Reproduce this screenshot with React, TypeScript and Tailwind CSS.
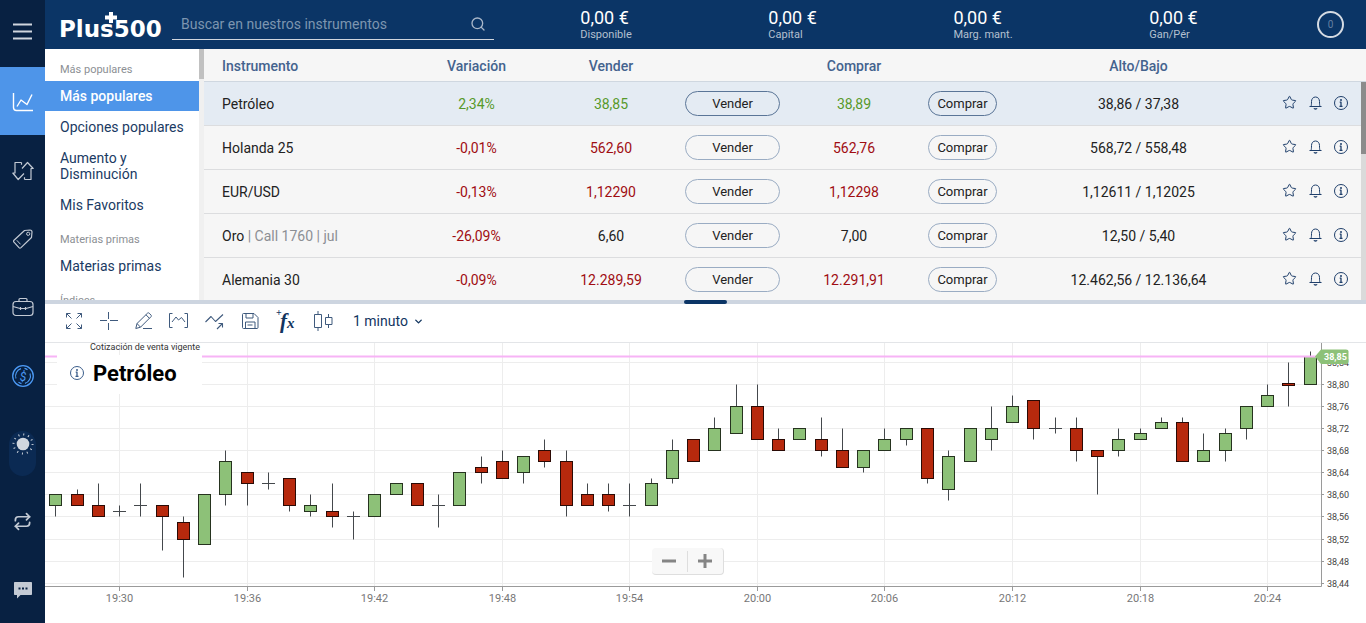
import { useState } from 'react'
import type { ReactNode } from 'react'
import { ChevronDown, Repeat, Search, Star } from 'lucide-react'
import clsx from 'clsx'

const balances = [
  { label: 'Disponible', value: '0,00 €' },
  { label: 'Capital', value: '0,00 €' },
  { label: 'Marg. mant.', value: '0,00 €' },
  { label: 'Gan/Pér', value: '0,00 €' },
]

const categories = [
  { title: 'Más populares', items: ['Más populares', 'Opciones populares', 'Aumento y Disminución', 'Mis Favoritos'] },
  { title: 'Materias primas', items: ['Materias primas'] },
  { title: 'Índices', items: [] },
]

type Trend = 'up' | 'down' | 'flat'

interface Instrument {
  name: string
  detail?: string
  change: string
  sell: string
  buy: string
  range: string
  trend: Trend
}

const instruments: Instrument[] = [
  { name: 'Petróleo', change: '2,34%', sell: '38,85', buy: '38,89', range: '38,86 / 37,38', trend: 'up' },
  { name: 'Holanda 25', change: '-0,01%', sell: '562,60', buy: '562,76', range: '568,72 / 558,48', trend: 'down' },
  { name: 'EUR/USD', change: '-0,13%', sell: '1,12290', buy: '1,12298', range: '1,12611 / 1,12025', trend: 'down' },
  { name: 'Oro', detail: ' | Call 1760 | jul', change: '-26,09%', sell: '6,60', buy: '7,00', range: '12,50 / 5,40', trend: 'flat' },
  { name: 'Alemania 30', change: '-0,09%', sell: '12.289,59', buy: '12.291,91', range: '12.462,56 / 12.136,64', trend: 'down' },
]

// one candle per minute from 19:27: open, high, low, close in cents above 38,00
const candles: [number, number, number, number][] = [
  [58, 60, 56, 60], [60, 61, 58, 58], [58, 62, 56, 56], [57, 58, 56, 57], [58, 62, 56, 58],
  [58, 58, 50, 56], [55, 56, 45, 52], [51, 60, 51, 60], [60, 68, 58, 66], [64, 64, 58, 62],
  [62, 64, 61, 62], [63, 63, 57, 58], [57, 60, 56, 58], [57, 62, 54, 56], [56, 57, 52, 56],
  [56, 60, 56, 60], [60, 62, 60, 62], [62, 62, 58, 58], [58, 60, 54, 58], [58, 64, 58, 64],
  [65, 67, 62, 64], [66, 68, 63, 63], [64, 67, 62, 67], [68, 70, 65, 66], [66, 68, 56, 58],
  [60, 62, 58, 58], [60, 62, 57, 58], [58, 62, 56, 58], [58, 63, 58, 62], [63, 70, 62, 68],
  [70, 70, 66, 66], [68, 74, 68, 72], [71, 80, 71, 76], [76, 80, 70, 70], [70, 72, 68, 68],
  [70, 72, 70, 72], [70, 74, 67, 68], [68, 72, 65, 65], [65, 68, 64, 68], [68, 72, 68, 70],
  [70, 72, 69, 72], [72, 72, 62, 63], [61, 68, 59, 67], [66, 72, 66, 72], [70, 76, 68, 72],
  [73, 78, 73, 76], [77, 77, 70, 72], [72, 74, 71, 72], [72, 74, 66, 68], [68, 68, 60, 67],
  [68, 72, 67, 70], [70, 72, 70, 71], [72, 74, 72, 73], [73, 74, 66, 66], [66, 71, 66, 68],
  [68, 72, 66, 71], [72, 76, 70, 76], [76, 80, 76, 78], [80.1, 84, 76, 79.8], [80, 86, 80, 85],
]

const times = ['19:30', '19:36', '19:42', '19:48', '19:54', '20:00', '20:06', '20:12', '20:18', '20:24']
const prices = [84, 80, 76, 72, 68, 64, 60, 56, 52, 48, 44]

const candleX = (i: number) => Math.round(10.35 + i * 21.26) + 0.5
const priceY = (p: number) => Math.round(40.7 + (80 - p) * 5.53) + 0.5

const trendColor: Record<Trend, string> = {
  up: 'text-[#57992a]',
  down: 'text-[#a00d12]',
  flat: 'text-[#222]',
}

function Icon({ w, h, children, className }: { w: number; h: number; children: ReactNode; className?: string }) {
  return (
    <svg
      width={w}
      height={h}
      viewBox={`0 0 ${w} ${h}`}
      fill="none"
      stroke="currentColor"
      strokeLinejoin="round"
      className={clsx('shrink-0', className)}
      aria-hidden="true"
    >
      {children}
    </svg>
  )
}

function InfoIcon() {
  return (
    <Icon w={14} h={14}>
      <circle cx="7" cy="7" r="6.5" strokeWidth="1" />
      <path d="M5.7 6.2H7V10.2M5.5 10.4h3" strokeWidth="1.3" />
      <circle cx="7" cy="3.9" r="1" fill="currentColor" stroke="none" />
    </Icon>
  )
}

function BellIcon() {
  return (
    <Icon w={13} h={14}>
      <path d="M.5 10.5h12M2 10.5C2.4 9.5 2.5 8 2.5 5.5 2.5 3 4 1 6.5 1s4 2 4 4.5c0 2.5.1 4 .5 5" />
      <path d="M5 12.3c.4.9 2.6.9 3 0" strokeWidth="1.3" />
    </Icon>
  )
}

function Logo() {
  return (
    <a href="#" className="relative mt-2 block w-[113px] font-['DejaVu_Sans',sans-serif] text-[23px] leading-7 font-bold text-white">
      Plus500
      <svg width="12" height="11" viewBox="0 0 12 11" className="absolute -top-[3px] left-[46px]" fill="currentColor" aria-hidden="true">
        <path d="M4 0h4v3.5h4v4H8V11H4V7.5H0v-4h4z" />
      </svg>
    </a>
  )
}

function NavButton({ label, active, children }: { label: string; active?: boolean; children: ReactNode }) {
  return (
    <button
      type="button"
      aria-label={label}
      className={clsx(
        'flex w-full flex-1 items-center justify-center pt-0.5',
        active ? 'bg-[#4e95e9] text-white' : 'text-[#c3cad4]',
      )}
    >
      {children}
    </button>
  )
}

function SideNav() {
  return (
    <nav className="flex w-[45px] shrink-0 flex-col bg-[#082142]">
      <button type="button" aria-label="Menú" className="flex h-[67px] items-center justify-center pb-[5px] text-[#d0d6de]">
        <Icon w={19} h={17}>
          <path d="M0 1.5h19M0 8.5h19M0 15.5h19" strokeWidth="1.8" />
        </Icon>
      </button>
      <NavButton label="Operar" active>
        <Icon w={22} h={20}>
          <path d="M1.5 1v14.5c0 2 1 3 3 3H21M5 14.5l4-6.5 6 4.500 5-10" strokeWidth="1.4" />
        </Icon>
      </NavButton>
      <NavButton label="Posiciones">
        <Icon w={22} h={20}>
          <path d="M9.5 1.5H3V12H.8l5.4 6.500L12 12.500M9.500 1.500v2.200M12.500 18.500H19V7.500h2.200L15.500 1.500 10 7.500M12.500 18.500v-2.200" strokeWidth="1.2" />
        </Icon>
      </NavButton>
      <NavButton label="Órdenes">
        <Icon w={20} h={20}>
          <path d="M11.5 1.5 17 1c1.3 0 2 .7 2 2l-.5 5.500L8 18.600c-.7.600-1.400.600-2 0L1 13.200c-.6-.7-.6-1.400 0-2z" strokeWidth="1.2" />
          <circle cx="15.2" cy="4.8" r="1.6" />
          <path d="m3.8 11.3 3.7 4" />
        </Icon>
      </NavButton>
      <NavButton label="Posiciones cerradas">
        <Icon w={22} h={20}>
          <rect x="1" y="4.500" width="20" height="14" rx="3" strokeWidth="1.2" />
          <path d="M7 4.500v-2c0-.6.400-1 1-1h6c.6 0 1 .400 1 1v2M1 9.500l7 2M14 11.500l7-2M8 11.500h6M8.500 10v3M13.500 10v3" strokeWidth="1.2" />
        </Icon>
      </NavButton>
      <NavButton label="Fondos">
        <Icon w={22} h={22} className="text-[#4c9af5]">
          <circle cx="11" cy="11" r="10.3" strokeWidth="1.3" />
          <path d="M4 13.500A7.700 7.700 0 0 1 9 3.600M18 8.500a7.700 7.700 0 0 1-5 9.900M12.500 3.400a7.700 7.700 0 0 1 3 1.300M9.500 18.600a7.700 7.700 0 0 1-3-1.300" strokeWidth="1.1" />
          <text x="11" y="15.500" textAnchor="middle" fontSize="12" fontStyle="italic" fontFamily="Roboto, sans-serif" fill="currentColor" stroke="none">$</text>
        </Icon>
      </NavButton>
      <div className="flex h-[77px] items-start justify-center pt-[22px]">
        <button type="button" aria-label="Modo claro" className="flex h-[45px] w-[27px] justify-center rounded-full bg-[#0b2a53] pt-0.5 text-[#d0d6de]">
          <Icon w={22} h={22}>
            <circle cx="11" cy="11" r="6.3" fill="currentColor" stroke="none" />
            <circle cx="11" cy="11" r="9.5" strokeWidth="2" strokeDasharray="1 3.974" />
          </Icon>
        </button>
      </div>
      <NavButton label="Cambiar cuenta">
        <Repeat size={19} strokeWidth={2.2} />
      </NavButton>
      <NavButton label="Chat">
        <Icon w={20} h={18}>
          <path d="M2 1h16c.6 0 1 .4 1 1v11c0 .6-.4 1-1 1H7.500L4 17.500V14H2c-.6 0-1-.4-1-1V2c0-.6.4-1 1-1z" fill="currentColor" stroke="none" />
          <path d="M5.500 7.500h2M9 7.500h2M12.500 7.500h2" stroke="#082142" strokeWidth="1.8" />
        </Icon>
      </NavButton>
    </nav>
  )
}

function Header() {
  return (
    <header className="flex h-[49px] items-center bg-[#0b3566] pr-[22px] pl-[14px]">
      <Logo />
      <label className="flex h-[30px] w-[322px] items-center border-b border-[#d0d6de] pr-2 pl-[9px]">
        <input
          type="search"
          aria-label="Buscar"
          placeholder="Buscar en nuestros instrumentos"
          className="min-w-0 flex-1 bg-transparent text-sm text-white outline-none placeholder:text-[#7d95b0]"
        />
        <Search size={16} strokeWidth={2} className="text-[#a9b7c9]" />
      </label>
      <dl className="ml-[18px] flex flex-1 justify-around pt-px">
        {balances.map(b => (
          <div key={b.label} className="flex flex-col-reverse">
            <dt className="text-[11px] leading-[14px] text-[#b4c0d0]">{b.label}</dt>
            <dd className="text-[18px] leading-5 text-white">{b.value}</dd>
          </div>
        ))}
      </dl>
      <button
        type="button"
        aria-label="Notificaciones"
        className="ml-[51px] flex size-[27px] items-center justify-center rounded-full border-2 border-[#d5dbe3] text-[10px] text-[#6680a3]"
      >
        0
      </button>
    </header>
  )
}

function CategoryList() {
  const [selected, setSelected] = useState('Más populares')

  return (
    <div className="flex w-[159px] shrink-0 bg-white">
      <div className="flex flex-1 flex-col overflow-hidden pt-px">
        {categories.map(group => (
          <section key={group.title} className="flex flex-col gap-px">
            <h2 className="h-[30px] shrink-0 pt-3 pl-[15px] text-[11px] leading-4 text-[#8c8f94]">{group.title}</h2>
            {group.items.map(item => (
              <button
                key={item}
                type="button"
                onClick={() => setSelected(item)}
                className={clsx(
                  'py-[7px] pr-3 pl-[15px] text-left text-sm leading-4 text-balance',
                  item === selected ? 'bg-[#4e95e9] font-medium text-white' : 'text-[#1a3a63]',
                )}
              >
                {item}
              </button>
            ))}
          </section>
        ))}
      </div>
      <div className="w-[5px] bg-[#f0f0f0]">
        <div className="h-[30px] bg-[#c1c1c1]" />
      </div>
    </div>
  )
}

function InstrumentTable() {
  return (
    <div className="relative min-w-0 flex-1 overflow-hidden bg-[#f6f6f6]">
      <table className="w-full table-fixed border-separate border-spacing-0 text-center text-sm text-[#222]">
        <colgroup>
          <col />
          <col className="w-[121px]" />
          <col className="w-[148px]" />
          <col className="w-[95px]" />
          <col className="w-[148px]" />
          <col className="w-[69px]" />
          <col className="w-[283px]" />
          <col className="w-[86px]" />
        </colgroup>
        <thead>
          <tr className="text-[#44638e] [&>th]:h-[33px] [&>th]:border-b [&>th]:border-[#cfd7e0] [&>th]:pt-0.5 [&>th]:font-medium">
            <th className="pl-[18px] text-left">Instrumento</th>
            <th>Variación</th>
            <th>Vender</th>
            <th />
            <th>Comprar</th>
            <th />
            <th>Alto/Bajo</th>
            <th />
          </tr>
        </thead>
        <tbody>
          {instruments.map((row, i) => (
            <tr
              key={row.name}
              className={clsx('[&>td]:h-11 [&>td]:border-b [&>td]:border-[#dcdddf]', i === 0 && 'bg-[#e4ebf3]')}
            >
              <td className="pl-[18px] text-left">
                {row.name}
                {row.detail && <span className="text-[#8c8f94]">{row.detail}</span>}
              </td>
              <td className={trendColor[row.trend === 'flat' ? 'down' : row.trend]}>{row.change}</td>
              <td className={trendColor[row.trend]}>{row.sell}</td>
              <td>
                <TradeButton selected={i === 0}>Vender</TradeButton>
              </td>
              <td className={trendColor[row.trend]}>{row.buy}</td>
              <td>
                <TradeButton selected={i === 0}>Comprar</TradeButton>
              </td>
              <td>{row.range}</td>
              <td>
                <div className="flex items-center gap-3 pb-0.5 pl-0.5 text-[#1f3f6b]">
                  <button type="button" aria-label={`Añadir ${row.name} a favoritos`}>
                    <Star size={15} strokeWidth={1.6} />
                  </button>
                  <button type="button" aria-label={`Alertas de ${row.name}`}>
                    <BellIcon />
                  </button>
                  <button type="button" aria-label={`Detalles de ${row.name}`}>
                    <InfoIcon />
                  </button>
                </div>
              </td>
            </tr>
          ))}
        </tbody>
      </table>
      <div className="absolute top-[33px] right-0 bottom-0 w-[5px] bg-[#dadada]">
        <div className="h-[72px] bg-[#8b8b8b]" />
      </div>
    </div>
  )
}

function TradeButton({ selected, children }: { selected: boolean; children: ReactNode }) {
  return (
    <button
      type="button"
      className={clsx(
        'block h-[25px] w-full rounded-full border text-[13px] leading-[22px]',
        selected ? 'border-[#5a7597]' : 'border-[#9aacc3]',
      )}
    >
      {children}
    </button>
  )
}

function ChartToolbar() {
  return (
    <div className="flex h-[39px] items-center gap-[17px] border-b border-[#e3e5e8] bg-white pb-1 pl-5 text-[#3f5a7d]">
      <button type="button" aria-label="Pantalla completa">
        <Icon w={18} h={18}>
          <path d="M1.5 5.5v-4h4M12.500 1.500h4v4M16.500 12.500v4h-4M5.500 16.500h-4v-4M1.500 1.500l5 5M16.500 1.500l-5 5M16.500 16.500l-5-5M1.500 16.500l5-5" />
        </Icon>
      </button>
      <button type="button" aria-label="Cruz">
        <Icon w={18} h={18}>
          <path d="M8.500 0v7M8.500 11v7M0 8.500h7M10 8.500h8" />
        </Icon>
      </button>
      <button type="button" aria-label="Dibujar">
        <Icon w={17} h={18}>
          <path d="M.8 16.500 2 11.500 12.500 1.200c.6-.5 1.200-.5 1.700 0l1.800 1.900c.5.6.5 1.100 0 1.600L5.500 15.200zM2 11.500l3.500 3.700M11 2.800l3.400 3.500M8 16.500h9" />
        </Icon>
      </button>
      <button type="button" aria-label="Tipo de gráfico">
        <Icon w={19} h={18}>
          <path d="M3.500 1.500h-3v14h3M15.500 1.500h3v14h-3M3 10l4-5 2.500 3 3-2.500L16 10" />
        </Icon>
      </button>
      <button type="button" aria-label="Línea de tendencia">
        <Icon w={19} h={18}>
          <path d="M.5 10 6 4.500l4.500 5L18 2.500M12 17l5.500-5.500M13.500 11.500h4v4" strokeWidth="1.1" />
        </Icon>
      </button>
      <button type="button" aria-label="Guardar">
        <Icon w={18} h={18}>
          <path d="M1.500 2.500c0-.6.4-1 1-1H13l4 4v10c0 .6-.4 1-1 1H2.500c-.6 0-1-.4-1-1zM5 1.500v4.500h7V1.500M4.500 16.500V10h9.500v6.500M6.500 13h5" />
        </Icon>
      </button>
      <button type="button" aria-label="Indicadores" className="relative h-[18px] w-[19px] pl-1 text-left font-['Liberation_Serif',serif] text-[21px] leading-[18px] font-bold text-[#12355f] italic">
        f<span className="text-[15px]">x</span>
        <span className="absolute -top-1 left-0 text-[10px] leading-[10px] not-italic">+</span>
      </button>
      <button type="button" aria-label="Velas" className="pl-px">
        <Icon w={20} h={20}>
          <path d="M1.500 3.500h7v13h-7zM5 0v3.500M5 16.500V20M12.500 6.500h6.500v7h-6.500zM15.500 3v3.500M15.500 13.500V17" />
        </Icon>
      </button>
      <label className="relative ml-[3px] flex items-center">
        <select aria-label="Intervalo" className="w-[71px] appearance-none bg-transparent text-sm text-[#12355f] outline-none">
          <option>1 minuto</option>
          <option>5 minutos</option>
          <option>1 hora</option>
        </select>
        <ChevronDown size={11} strokeWidth={3} className="pointer-events-none absolute right-0 text-[#12355f]" />
      </label>
    </div>
  )
}

function CandleChart() {
  return (
    <svg viewBox="0 0 1321 280" className="block w-full font-['Roboto',sans-serif]" role="img" aria-label="Gráfico de velas">
      <g stroke="#ededed">
        {prices.map(p => (
          <line key={p} x1="0" x2="1276" y1={priceY(p)} y2={priceY(p)} />
        ))}
        {times.map((t, i) => (
          <line key={t} x1={candleX(3 + i * 6)} x2={candleX(3 + i * 6)} y1="0" y2="243" />
        ))}
      </g>
      {candles.map(([open, high, low, close], i) => {
        const x = candleX(i)
        const top = priceY(Math.max(open, close))
        const bottom = priceY(Math.min(open, close))
        return (
          <g key={i}>
            <line x1={x} x2={x} y1={priceY(high)} y2={priceY(low)} stroke="#44484c" />
            {open === close ? (
              <line x1={x - 6.5} x2={x + 6.5} y1={top} y2={top} stroke="#44484c" />
            ) : (
              <rect
                x={x - 6}
                y={top}
                width="12"
                height={bottom - top}
                fill={close > open ? '#8dc178' : '#b7290d'}
                stroke={close > open ? '#26331f' : '#2b0a05'}
              />
            )}
          </g>
        )
      })}
      <line x1="0" x2="1276" y1="13.5" y2="13.5" stroke="#f7b4f6" strokeWidth="2" />
      <g stroke="#9a9a9a">
        <path d="M0 243.5H1276.5V0" fill="none" />
        {prices.map(p => (
          <line key={p} x1="1276" x2="1279" y1={priceY(p)} y2={priceY(p)} />
        ))}
        {times.map((t, i) => (
          <line key={t} x1={candleX(3 + i * 6)} x2={candleX(3 + i * 6)} y1="243" y2="248" />
        ))}
      </g>
      <g fontSize="9" fill="#444">
        {prices.map(p => (
          <text key={p} x="1282" y={priceY(p) + 3}>{`38,${p}`}</text>
        ))}
      </g>
      <g fontSize="11" fill="#777" textAnchor="middle">
        {times.map((t, i) => (
          <text key={t} x={candleX(3 + i * 6)} y="259">{t}</text>
        ))}
      </g>
      <path d="M1270 13.5 1276 6.5h25c1.5 0 2.5.7 2.5 2v10c0 1.5-1 2.5-2.5 2.5h-25z" fill="#8dc178" />
      <text x="1279" y="16.5" fontSize="9" fontWeight="700" fill="#fff">38,85</text>
    </svg>
  )
}

function ChartPanel() {
  return (
    <section className="bg-white">
      <ChartToolbar />
      <div className="relative">
        <CandleChart />
        <div className="absolute top-0 left-3 w-[145px]">
          <p className="pl-[33px] text-[9px] leading-[9px] whitespace-nowrap text-[#333]">Cotización de venta vigente</p>
          <div className="mt-[3px] flex h-[39px] items-center gap-[9px] bg-white pb-1 pl-[13px]">
            <button type="button" aria-label="Detalles de Petróleo" className="text-[#3b5d8a]">
              <InfoIcon />
            </button>
            <h1 className="pt-0.5 text-[22px] leading-7 font-bold text-black">Petróleo</h1>
          </div>
        </div>
        <div className="absolute inset-x-0 bottom-12 flex justify-center pr-9 text-[#858585]">
          <div className="flex h-[27px] w-[72px] items-center rounded-sm border-r border-b border-[#dedede] bg-[#f8f8f8]">
            <button type="button" aria-label="Alejar" className="flex h-[21px] flex-1 items-center justify-center border-r border-[#dedede]">
              <Icon w={14} h={14}>
                <path d="M0 7h14" strokeWidth="3" />
              </Icon>
            </button>
            <button type="button" aria-label="Acercar" className="flex h-[21px] flex-1 items-center justify-center">
              <Icon w={14} h={14}>
                <path d="M0 7h14M7 0v14" strokeWidth="3" />
              </Icon>
            </button>
          </div>
        </div>
      </div>
    </section>
  )
}

export default function App() {
  return (
    <div className="flex min-h-screen bg-white font-['Roboto',sans-serif]">
      <SideNav />
      <main className="min-w-0 flex-1">
        <Header />
        <div className="flex h-[251px]">
          <CategoryList />
          <InstrumentTable />
        </div>
        <div className="flex h-1 justify-center bg-[#cdd5e0]">
          <div className="h-1 w-[43px] rounded-sm bg-[#0b3566]" />
        </div>
        <ChartPanel />
      </main>
    </div>
  )
}
